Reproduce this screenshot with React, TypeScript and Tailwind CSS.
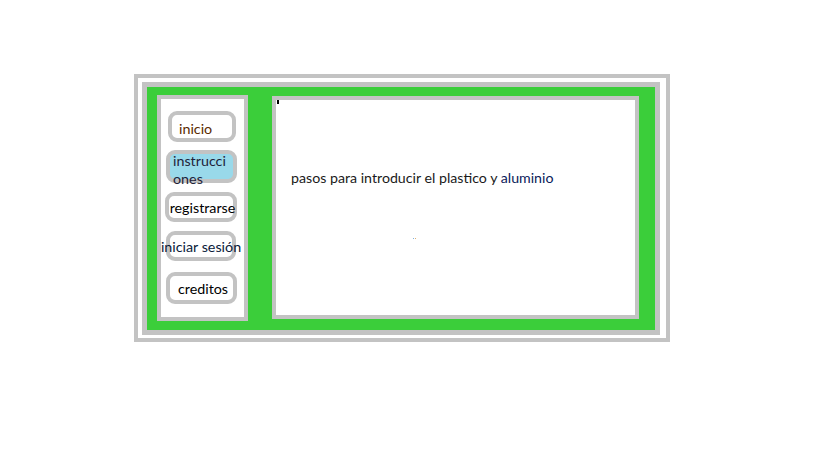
import React from "react";

const font = { fontFamily: "Lato, 'Noto Sans', sans-serif" };

export default function App() {
  return (
    <div className="w-[819px] h-[460px] bg-white overflow-hidden" style={font}>
      <div className="ml-[134px] mt-[74px] w-[536px] h-[268px] border-4 border-[#c3c3c3] bg-white pt-[4px] pl-[4px] pr-[6px] pb-[3px]">
        <div className="w-full h-full border-[5px] border-[#c3c3c3] bg-[#3bce3a] flex items-start pl-[10px]">
          {/* sidebar */}
          <div className="mt-[8px] w-[91px] h-[226px] border-4 border-[#c3c3c3] bg-white flex flex-col text-[14.3px] text-black">
            <div className="ml-[7px] mt-[12px] w-[68px] h-[31px] border-4 border-[#c3c3c3] rounded-[9px] bg-white flex items-center pl-[7px] pt-[5px] leading-none">
              <span className="text-[#5a2a00]">inicio</span>
            </div>
            <div className="ml-[5px] mt-[8px] w-[71px] h-[33px] border-[4px] border-[#c3c3c3] rounded-[9px] bg-[#99d9ea]">
              <div className="-mt-[2px] pl-[3px] leading-[18px] text-[#1f1f3a]">
                instrucci
                <br />
                ones
              </div>
            </div>
            <div className="ml-[4px] mt-[9px] w-[72px] h-[30px] border-4 border-[#c3c3c3] rounded-[9px] bg-white flex items-center justify-center pt-[3px] whitespace-nowrap leading-none">
              <span className="ml-[3px]">registrarse</span>
            </div>
            <div className="ml-[5px] mt-[9px] w-[70px] h-[30px] border-4 border-[#c3c3c3] rounded-[9px] bg-white flex items-center justify-center pt-[3px] whitespace-nowrap leading-none">
              <span className="text-[#0a1a3a]">iniciar sesión</span>
            </div>
            <div className="ml-[5px] mt-[11px] w-[71px] h-[32px] border-4 border-[#c3c3c3] rounded-[9px] bg-white flex items-center justify-center pt-[2px] whitespace-nowrap leading-none">
              <span className="ml-[3px]">creditos</span>
            </div>
          </div>
          {/* main */}
          <div className="ml-[24px] mt-[9px] w-[367px] h-[223px] border-4 border-[#c3c3c3] bg-white relative">
            <div className="absolute left-[1px] top-[0px] w-[2px] h-[4px] bg-black" />
            <div className="pl-[15px] pt-[69px] text-[14.2px] leading-[18px] text-[#1a1a1a] whitespace-nowrap">
              pasos para introducir el plastico y <span className="text-[#0a1a5a]">aluminio</span>
            </div>
            <div className="ml-[137px] mt-[51px] flex gap-[1px]">
              <span className="w-[1px] h-[1px] bg-[#7fb0e0]" />
              <span className="w-[1px] h-[1px] bg-[#e0b070]" />
            </div>
          </div>
        </div>
      </div>
    </div>
  );
}
